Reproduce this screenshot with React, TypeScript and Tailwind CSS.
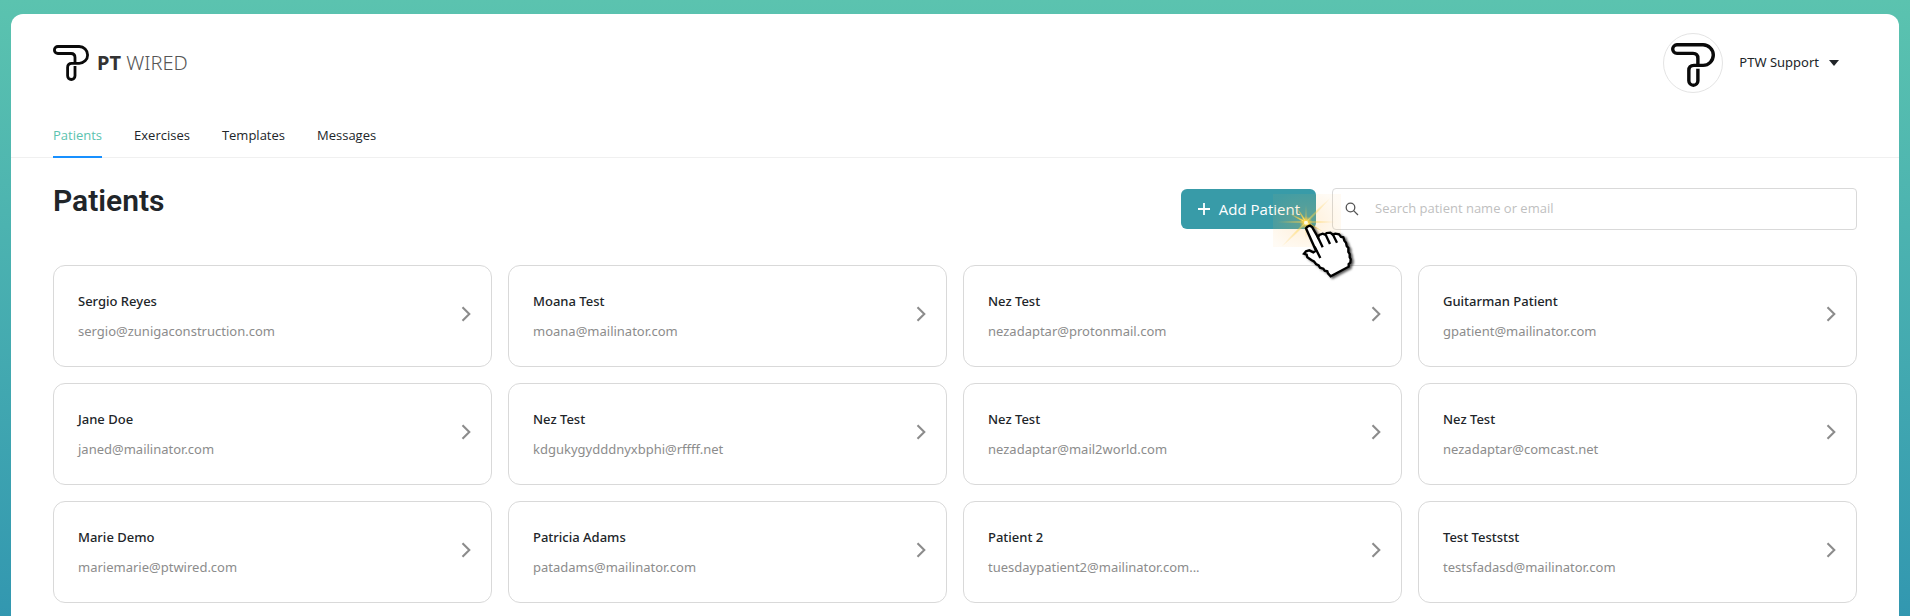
import React from "react";

type Patient = { name: string; email: string };

const patients: Patient[] = [
  { name: "Sergio Reyes", email: "sergio@zunigaconstruction.com" },
  { name: "Moana Test", email: "moana@mailinator.com" },
  { name: "Nez Test", email: "nezadaptar@protonmail.com" },
  { name: "Guitarman Patient", email: "gpatient@mailinator.com" },
  { name: "Jane Doe", email: "janed@mailinator.com" },
  { name: "Nez Test", email: "kdgukygydddnyxbphi@rffff.net" },
  { name: "Nez Test", email: "nezadaptar@mail2world.com" },
  { name: "Nez Test", email: "nezadaptar@comcast.net" },
  { name: "Marie Demo", email: "mariemarie@ptwired.com" },
  { name: "Patricia Adams", email: "patadams@mailinator.com" },
  { name: "Patient 2", email: "tuesdaypatient2@mailinator.com..." },
  { name: "Test Teststst", email: "testsfadasd@mailinator.com" },
];

const tabs = ["Patients", "Exercises", "Templates", "Messages"];

function Mark({ className }: { className: string }) {
  return (
    <svg viewBox="0 0 36 36" className={className} fill="none" stroke="#0a0a0a" strokeWidth="2.8" aria-hidden="true">
      <path d="M22 17V12.6Q22 8.5 18 8.5H4.9A3.5 3.5 0 0 1 4.9 1.5H26.2A8.4 8.4 0 0 1 26.2 18.3H18.8Q14.6 18.3 14.6 22.4V30.8A3.7 3.7 0 0 0 22 30.8V21" />
    </svg>
  );
}

function Pointer() {
  return (
    <svg viewBox="0 0 330 300" className="pointer-events-none absolute top-px -right-16 h-[100px] w-[110px] max-w-none" aria-hidden="true">
      <defs>
        <radialGradient id="glow">
          <stop offset="0" stopColor="#fff7c2" />
          <stop offset="0.3" stopColor="#ffd94a" stopOpacity="0.9" />
          <stop offset="1" stopColor="#ffc23a" stopOpacity="0" />
        </radialGradient>
        <radialGradient id="haze" cx="0.48" cy="0.53" r="0.6">
          <stop offset="0" stopColor="#ffb84d" stopOpacity="0.22" />
          <stop offset="1" stopColor="#ffb84d" stopOpacity="0.06" />
        </radialGradient>
        <filter id="shade" x="-20%" y="-20%" width="150%" height="150%">
          <feDropShadow dx="6" dy="4" stdDeviation="3" floodColor="#000" floodOpacity="0.65" />
        </filter>
      </defs>
      <rect x="9" y="12" width="204" height="159" fill="url(#haze)" />
      <g fill="url(#glow)">
        <circle cx="108" cy="98" r="20" />
        <ellipse cx="108" cy="96" rx="100" ry="3" opacity="0.7" />
        <ellipse cx="108" cy="97" rx="3" ry="60" opacity="0.6" />
        <ellipse cx="108" cy="97" rx="105" ry="5" transform="rotate(-45 108 97)" opacity="0.55" />
        <ellipse cx="108" cy="97" rx="60" ry="4" transform="rotate(28 108 97)" />
        <ellipse cx="108" cy="97" rx="55" ry="4" transform="rotate(58 108 97)" />
      </g>
      <circle cx="108" cy="98" r="6" fill="#fffbe0" />
      <g filter="url(#shade)" stroke="#000" strokeWidth="7" strokeLinejoin="miter">
        <path
          fill="#fff"
          d="M108 115L112 110L120 107L126 111L144 142L148 135L158 131L165 134L170 129L181 128L188 134L196 131L207 133L213 141L220 142L223 152L228 158L230 168L235 174L235 186L239 192L239 202L242 208L241 218L236 222L236 230L182 259L174 250L172 244L164 242L160 236L150 233L146 226L138 222L132 214L124 210L112 202L110 194L102 191L108 184L118 181L130 187L138 182Z"
        />
        <path fill="none" d="M134 170L151 204M142 138L158 172M167 134L180 162M189 134L201 158" />
      </g>
    </svg>
  );
}

export default function App() {
  return (
    <div className="min-h-screen bg-linear-to-b from-[#5bc3af] to-[#3297b0] px-[11px] pt-3.5 font-['Open_Sans','Noto_Sans',sans-serif] text-[13px] text-[#212529]">
      <div className="flex min-h-[calc(100vh-14px)] flex-col rounded-t-xl bg-white">
        <header className="flex items-center justify-between pt-[19px] pr-[60px] pl-[42px]">
          <a href="#" className="flex items-center gap-2" aria-label="PT Wired">
            <Mark className="size-9" />
            <span className="font-['Noto_Sans',sans-serif] text-xl leading-6 text-[#555]">
              <b className="font-bold text-[#333]">PT</b> <span className="font-light">WIRED</span>
            </span>
          </a>
          <button className="flex items-center gap-4">
            <span className="flex size-[60px] items-center justify-center rounded-full border border-[#e4e4e4] pt-1">
              <Mark className="size-11" />
            </span>
            <span className="flex items-center gap-2.5 font-['Noto_Sans',sans-serif]">
              PTW Support
              <svg viewBox="0 0 10 6" className="h-1.5 w-2.5" fill="#212529" aria-hidden="true">
                <path d="M0 0H10L5 6Z" />
              </svg>
            </span>
          </button>
        </header>

        <nav className="mt-[19px] flex gap-8 border-b border-[#f0f0f0] px-[42px]">
          {tabs.map((tab, i) => (
            <a
              key={tab}
              href="#"
              className={
                i === 0
                  ? "-mb-px border-b-2 border-[#1890ff] pt-3 pb-2.5 leading-[22px] text-[#5bc3af]"
                  : "-mb-px border-b-2 border-transparent pt-3 pb-2.5 leading-[22px]"
              }
            >
              {tab}
            </a>
          ))}
        </nav>

        <main className="px-[42px] pb-4">
          <div className="flex items-start justify-between pt-[30px]">
            <h1 className="font-['Roboto',sans-serif] text-[30px] leading-[26px] font-semibold">Patients</h1>
            <div className="flex items-center gap-4">
              <div className="relative">
                <button className="flex h-10 items-center gap-2 rounded-md bg-[#389ba8] px-4 text-[15px] text-white">
                  <svg viewBox="0 0 14 14" className="size-3.5" stroke="#fff" strokeWidth="1.8" aria-hidden="true">
                    <path d="M7 1V13M1 7H13" />
                  </svg>
                  Add Patient
                </button>
                <Pointer />
              </div>
              <label className="flex h-[42px] w-[525px] items-center gap-4 rounded-sm border border-[#d9d9d9] px-3">
                <svg viewBox="0 0 14 14" className="size-3.5" fill="none" stroke="#555" strokeWidth="1.3" aria-hidden="true">
                  <circle cx="5.5" cy="5.5" r="4.3" />
                  <path d="M8.6 8.6L13 13" />
                </svg>
                <input
                  type="text"
                  aria-label="Search patients"
                  placeholder="Search patient name or email"
                  className="min-w-0 flex-1 outline-none placeholder:text-[#bfbfbf]"
                />
              </label>
            </div>
          </div>

          <ul className="mt-[35px] grid grid-cols-4 gap-4">
            {patients.map((p) => (
              <li key={p.email}>
                <a href="#" className="flex items-center justify-between rounded-xl border border-[#d9d9d9] py-6 pr-5 pl-6 leading-[22px]">
                  <span className="flex flex-col gap-2 font-['Noto_Sans',sans-serif]">
                    <span className="font-medium">{p.name}</span>
                    <span className="text-[#8c8c8c]">{p.email}</span>
                  </span>
                  <svg viewBox="0 0 10 16" className="mb-1 h-4 w-2.5" fill="none" stroke="#8c8c8c" strokeWidth="2.1" aria-hidden="true">
                    <path d="M1.5 1.2L8.3 8L1.5 14.8" />
                  </svg>
                </a>
              </li>
            ))}
          </ul>
        </main>
      </div>
    </div>
  );
}
